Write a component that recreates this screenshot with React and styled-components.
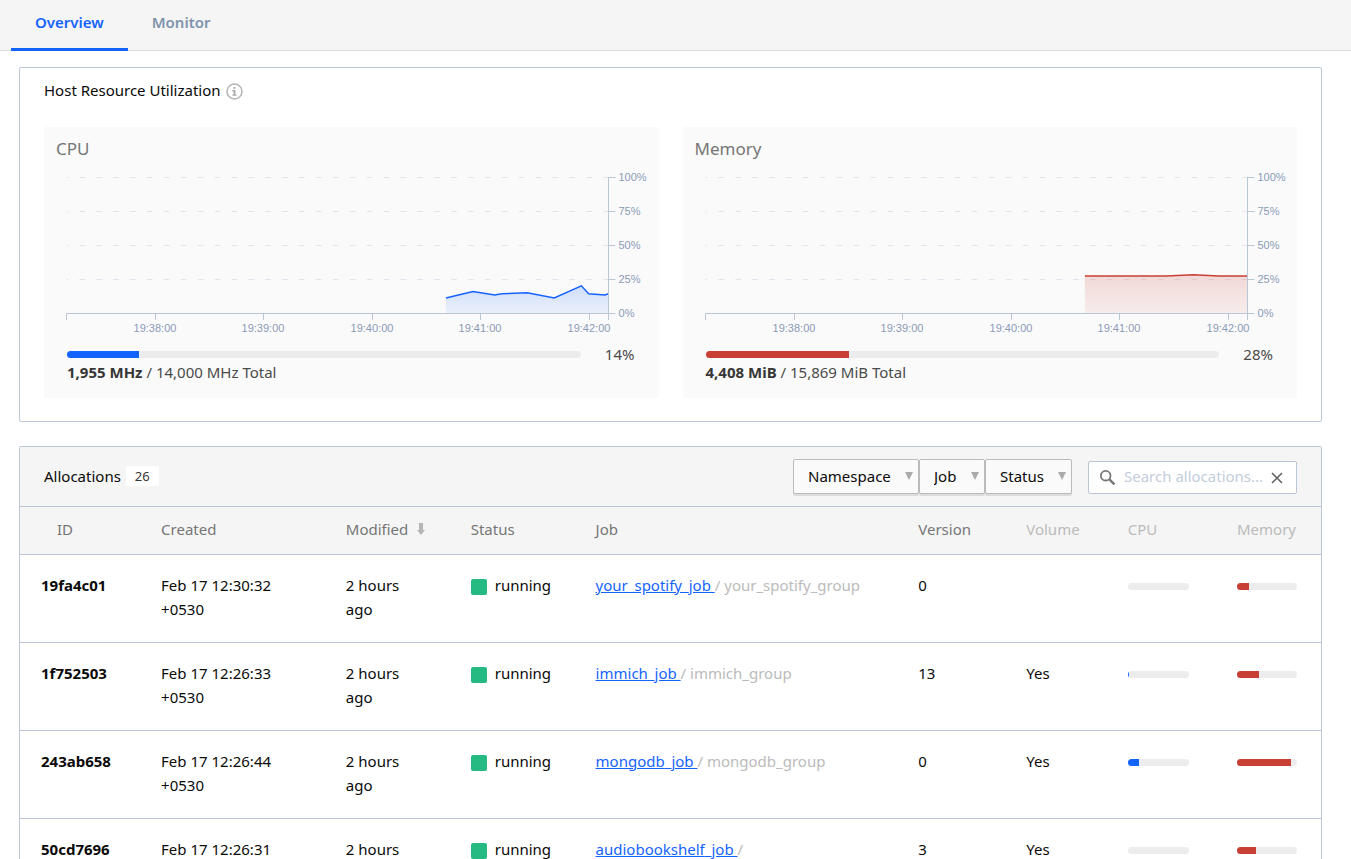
import { useLayoutEffect, useRef, useState } from "react";
import styled, { createGlobalStyle } from "styled-components";

const COLORS = {
  BLUE: "#1563ff",
  RED: "#c84034",
  GREEN: "#25ba81",
  BORDER: "#bac5d5",
  GREY_TEXT: "#767676",
  LIGHT_TEXT: "#bbbbbb",
  AXIS_TEXT: "#8a9ab8",
};

const GlobalStyle = createGlobalStyle`
  * {
    box-sizing: border-box;
  }

  body {
    margin: 0;
    background: white;
    color: #0a0a0a;
    font-family: "Noto Sans", "Open Sans", sans-serif;
    font-size: 15px;
    line-height: 24px;
  }
`;

const Tabs = styled.nav`
  display: flex;
  height: 51px;
  padding-left: 11px;
  background: #f5f5f5;
  border-bottom: 1px solid #dbdbdb;
`;

const Tab = styled.a`
  height: 51px;
  padding: 10px 24px 0 24px;
  border-bottom: 3px solid
    ${(props) => (props.$active ? COLORS.BLUE : "transparent")};
  color: ${(props) => (props.$active ? COLORS.BLUE : "#7f93ac")};
  font-weight: 600;
  text-decoration: none;
`;

const Page = styled.main`
  display: flex;
  flex-direction: column;
  gap: 24px;
  padding: 16px 29px 24px 19px;
`;

const Box = styled.section`
  border: 1px solid ${COLORS.BORDER};
  border-radius: 2px;
`;

const BoxTitle = styled.h2`
  display: flex;
  align-items: center;
  gap: 5px;
  margin: 0;
  padding-bottom: 2px;
  font-size: 15px;
  font-weight: 400;

  svg {
    margin-top: 2px;
  }
`;

const Utilization = styled.div`
  padding: 10px 24px 23px 24px;
`;

const MetricGrid = styled.div`
  display: grid;
  grid-template-columns: 1fr 1fr;
  gap: 24px;
  margin-top: 23px;
`;

const Metric = styled.div`
  min-width: 0;
  padding: 10px 0 16px 0;
  border-radius: 2px;
  background: #fafafa;
`;

const MetricTitle = styled.h3`
  margin: 0;
  padding: 0 12px;
  color: ${COLORS.GREY_TEXT};
  font-size: 17px;
  font-weight: 400;
  line-height: 24px;
`;

const ChartSvg = styled.svg`
  display: block;
  width: 100%;
  height: 185px;

  text {
    fill: ${COLORS.AXIS_TEXT};
    font-family: "Liberation Sans", Arial, sans-serif;
    font-size: 11px;
  }
`;

const Usage = styled.div`
  display: flex;
  align-items: center;
  gap: 24px;
  padding: 0 24px 0 23px;
  color: #4a4a4a;
  line-height: 16px;
`;

const Track = styled.div`
  flex: 1;
  height: 7px;
  overflow: hidden;
  border-radius: 4px;
  background: #ececec;
`;

const Fill = styled.div`
  height: 100%;
  background: ${(props) => props.$color};
`;

const Totals = styled.p`
  margin: 0;
  padding: 0 24px 0 23px;
  color: #4a4a4a;
  line-height: 20px;

  strong {
    color: #363636;
    font-weight: 700;
  }
`;

const TableHead = styled.header`
  display: flex;
  align-items: center;
  height: 60px;
  padding: 0 24px;
  border-bottom: 1px solid ${COLORS.BORDER};
  background: #f5f5f5;
`;

const Count = styled.span`
  padding: 0 9px;
  border-radius: 2px;
  background: white;
  color: #363636;
  font-size: 13px;
  line-height: 20px;
`;

const Filters = styled.div`
  display: flex;
  margin-left: auto;
  margin-right: 16px;
`;

const FilterWrapper = styled.label`
  position: relative;
  display: flex;
`;

const FilterSelect = styled.select`
  appearance: none;
  height: 35px;
  padding: 0 27px 2px 14px;
  border: 1px solid ${COLORS.LIGHT_TEXT};
  border-radius: 2px;
  background: #fafafa;
  box-shadow: 0 2px 0 rgba(0, 0, 0, 0.1);
  color: #0a0a0a;
  font: inherit;
`;

const Caret = styled.svg`
  position: absolute;
  top: 13px;
  right: 6px;
  width: 8px;
  height: 8px;
  pointer-events: none;
`;

const SearchBox = styled.label`
  display: flex;
  align-items: center;
  width: 209px;
  height: 33px;
  margin-top: 2px;
  padding: 0 12px 0 10px;
  border: 1px solid ${COLORS.BORDER};
  border-radius: 2px;
  background: white;
`;

const SearchInput = styled.input`
  flex: 1;
  min-width: 0;
  padding: 0 0 3px 0;
  margin-left: 7px;
  border: none;
  outline: none;
  font: inherit;

  &::placeholder {
    color: #c3cddb;
    opacity: 1;
  }
`;

const ClearBtn = styled.button`
  display: flex;
  padding: 0;
  border: none;
  background: none;
`;

const Table = styled.table`
  width: 100%;
  table-layout: fixed;
  border-collapse: collapse;
`;

const Th = styled.th`
  height: 47px;
  padding: 0 24px 3px 24px;
  background: #f5f5f5;
  border-bottom: 1px solid ${COLORS.BORDER};
  color: ${(props) => (props.$muted ? COLORS.LIGHT_TEXT : COLORS.GREY_TEXT)};
  font-weight: 400;
  text-align: left;
  white-space: nowrap;

  &:first-child {
    padding-left: 37px;
  }

  svg {
    margin-left: 9px;
  }
`;

const Td = styled.td`
  height: 88px;
  padding: 18px 24px 20px 24px;
  border-bottom: 1px solid ${COLORS.BORDER};
  vertical-align: top;

  &:first-child {
    padding-left: 21px;
    font-weight: 700;
  }
`;

const Status = styled.span`
  display: flex;
  align-items: center;
  gap: 8px;

  &::before {
    content: "";
    flex: none;
    width: 16px;
    height: 16px;
    margin-top: 4px;
    border-radius: 2px;
    background: ${COLORS.GREEN};
  }
`;

const JobLink = styled.a`
  color: ${COLORS.BLUE};
  text-decoration: underline;
  white-space: pre;
`;

const Group = styled.span`
  color: ${COLORS.LIGHT_TEXT};
`;

const BarCell = styled.div`
  display: flex;
  align-items: center;
  height: 28px;
`;

// seconds before the right edge, percent
const cpuSeries = [
  [90, 11],
  [75, 15.8],
  [63, 13.3],
  [59, 14.2],
  [45, 14.9],
  [30, 11],
  [15, 20],
  [11, 14.2],
  [2, 13.3],
  [0, 14.2],
];

const memorySeries = [
  [90, 27.2],
  [45, 27.2],
  [30, 28.2],
  [16, 27.2],
  [0, 27.2],
];

const timeTicks = [
  [251, "19:38:00"],
  [191, "19:39:00"],
  [131, "19:40:00"],
  [71, "19:41:00"],
  [11, "19:42:00"],
];

const columns = [
  { name: "ID", width: "9%" },
  { name: "Created", width: "14.2%" },
  { name: "Modified", width: "9.6%", sorted: true },
  { name: "Status", width: "9.6%" },
  { name: "Job", width: "24.8%" },
  { name: "Version", width: "8.3%" },
  { name: "Volume", width: "7.8%", muted: true },
  { name: "CPU", width: "8.4%", muted: true },
  { name: "Memory", width: "8.3%", muted: true },
];

const allocations = [
  { id: "19fa4c01", created: "12:30:32", name: "your_spotify", version: 0, volume: "", cpu: 0, memory: 20 },
  { id: "1f752503", created: "12:26:33", name: "immich", version: 13, volume: "Yes", cpu: 2, memory: 36 },
  { id: "243ab658", created: "12:26:44", name: "mongodb", version: 0, volume: "Yes", cpu: 18, memory: 90 },
  { id: "50cd7696", created: "12:26:31", name: "audiobookshelf", version: 3, volume: "Yes", cpu: 0, memory: 31 },
];

const CHART_TOP = 16;
const CHART_HEIGHT = 136;

function Chart({ id, label, color, series }) {
  const ref = useRef(null);
  const [width, setWidth] = useState(614);

  useLayoutEffect(() => {
    const update = () => setWidth(Math.floor(ref.current.clientWidth));
    update();
    const observer = new ResizeObserver(update);
    observer.observe(ref.current);
    return () => observer.disconnect();
  }, []);

  const left = 22.5;
  const right = width - 50.5;
  const bottom = CHART_TOP + CHART_HEIGHT;
  const x = (t) => right - (t / 300) * (right - left);
  const y = (value) => bottom - (value / 100) * CHART_HEIGHT;
  const line = series.map(([t, v]) => `${x(t)},${y(v)}`).join(" L");

  return (
    <ChartSvg ref={ref} role="img" aria-label={label}>
      <defs>
        <linearGradient id={id} x1="0" y1="0" x2="0" y2="1">
          <stop offset="0%" stopColor={color} stopOpacity="0.18" />
          <stop offset="100%" stopColor={color} stopOpacity="0.07" />
        </linearGradient>
      </defs>
      {[25, 50, 75, 100].map((v) => (
        <path
          key={v}
          d={`M${left},${Math.round(y(v)) + 0.5} H${right}`}
          stroke="#e1e4ec"
          strokeDasharray="5.6 11.3"
          strokeDashoffset="4"
        />
      ))}
      <path
        d={`M${x(series[0][0])},${bottom} L${line} V${bottom} Z`}
        fill={`url(#${id})`}
      />
      <path d={`M${line}`} fill="none" stroke={color} strokeWidth="1.5" />
      <path
        d={`M${left},${bottom + 7} V${bottom + 0.5} H${right} V${bottom + 7}`}
        fill="none"
        stroke={COLORS.BORDER}
      />
      {timeTicks.map(([t, text]) => (
        <g key={text}>
          <path
            d={`M${Math.round(x(t)) + 0.5},${bottom} v7`}
            stroke={COLORS.BORDER}
          />
          <text x={Math.round(x(t))} y={bottom + 19} textAnchor="middle">
            {text}
          </text>
        </g>
      ))}
      <path
        d={`M${right},${CHART_TOP} V${bottom}`}
        stroke={COLORS.BORDER}
      />
      {[0, 25, 50, 75, 100].map((v) => (
        <g key={v}>
          <path
            d={`M${right},${Math.round(y(v)) + 0.5} h7`}
            stroke={COLORS.BORDER}
          />
          <text x={right + 10} y={Math.round(y(v)) + 4}>
            {v}%
          </text>
        </g>
      ))}
    </ChartSvg>
  );
}

function Bar({ percent, color, label }) {
  return (
    <Track role="img" aria-label={`${label} ${percent}%`}>
      <Fill $color={color} style={{ width: `${percent}%` }} />
    </Track>
  );
}

function MetricPanel({ title, id, color, series, percent, used, total }) {
  return (
    <Metric>
      <MetricTitle>{title}</MetricTitle>
      <Chart id={id} label={title} color={color} series={series} />
      <Usage>
        <Bar percent={percent} color={color} label={title} />
        <span>{percent}%</span>
      </Usage>
      <Totals>
        <strong>{used}</strong> / {total} Total
      </Totals>
    </Metric>
  );
}

function Filter({ name }) {
  return (
    <FilterWrapper>
      <FilterSelect aria-label={name}>
        <option>{name}</option>
      </FilterSelect>
      <Caret viewBox="0 0 8 8" aria-hidden="true">
        <path d="M0 0h8L4 8z" fill="#aaaaaa" />
      </Caret>
    </FilterWrapper>
  );
}

function App() {
  const [searchText, setSearchText] = useState("");

  return (
    <>
      <GlobalStyle />
      <Tabs>
        <Tab href="#overview" $active>
          Overview
        </Tab>
        <Tab href="#monitor">Monitor</Tab>
      </Tabs>
      <Page>
        <Box>
          <Utilization>
            <BoxTitle>
              Host Resource Utilization
              <svg width="17" height="17" viewBox="0 0 17 17" aria-hidden="true">
                <circle
                  cx="8.5"
                  cy="8.5"
                  r="7.5"
                  fill="none"
                  stroke="#b5b5b5"
                  strokeWidth="1.5"
                />
                <path
                  d="M7.4 4h2v1.8h-2zM6.4 7h3v4.4h1.2v1.4H6.4v-1.4h1.2V8.4H6.4z"
                  fill="#a8a8a8"
                />
              </svg>
            </BoxTitle>
            <MetricGrid>
              <MetricPanel
                title="CPU"
                id="cpu-fill"
                color={COLORS.BLUE}
                series={cpuSeries}
                percent={14}
                used="1,955 MHz"
                total="14,000 MHz"
              />
              <MetricPanel
                title="Memory"
                id="memory-fill"
                color={COLORS.RED}
                series={memorySeries}
                percent={28}
                used="4,408 MiB"
                total="15,869 MiB"
              />
            </MetricGrid>
          </Utilization>
        </Box>

        <Box>
          <TableHead>
            <BoxTitle>
              Allocations <Count>26</Count>
            </BoxTitle>
            <Filters>
              <Filter name="Namespace" />
              <Filter name="Job" />
              <Filter name="Status" />
            </Filters>
            <SearchBox>
              <svg width="18" height="18" viewBox="0 0 18 18" aria-hidden="true">
                <circle
                  cx="6.7"
                  cy="6.7"
                  r="4.8"
                  fill="none"
                  stroke="#767676"
                  strokeWidth="1.8"
                />
                <path
                  d="M10.4 10.4l5 5"
                  stroke="#767676"
                  strokeWidth="2.4"
                />
              </svg>
              <SearchInput
                value={searchText}
                onChange={(e) => setSearchText(e.target.value)}
                placeholder="Search allocations..."
                aria-label="Search allocations"
              />
              <ClearBtn aria-label="Clear" onClick={() => setSearchText("")}>
                <svg width="14" height="14" viewBox="0 0 14 14">
                  <path
                    d="M2 2l10 10M12 2L2 12"
                    stroke="#5f5f5f"
                    strokeWidth="1.5"
                  />
                </svg>
              </ClearBtn>
            </SearchBox>
          </TableHead>
          <Table>
            <colgroup>
              {columns.map((column) => (
                <col key={column.name} width={column.width} />
              ))}
            </colgroup>
            <thead>
              <tr>
                {columns.map((column) => (
                  <Th key={column.name} $muted={column.muted}>
                    {column.name}
                    {column.sorted && (
                      <svg width="8" height="12" viewBox="0 0 8 12">
                        <path d="M2 0h4v7h2L4 12 0 7h2z" fill="#b5b5b5" />
                      </svg>
                    )}
                  </Th>
                ))}
              </tr>
            </thead>
            <tbody>
              {allocations.map((item) => (
                <tr key={item.id}>
                  <Td>{item.id}</Td>
                  <Td>Feb 17 {item.created} +0530</Td>
                  <Td>2 hours ago</Td>
                  <Td>
                    <Status>running</Status>
                  </Td>
                  <Td>
                    <JobLink href={`#${item.name}`}>{item.name}_job </JobLink>
                    <Group>/ {item.name}_group</Group>
                  </Td>
                  <Td>{item.version}</Td>
                  <Td>{item.volume}</Td>
                  <Td>
                    <BarCell>
                      <Bar percent={item.cpu} color={COLORS.BLUE} label="CPU" />
                    </BarCell>
                  </Td>
                  <Td>
                    <BarCell>
                      <Bar
                        percent={item.memory}
                        color={COLORS.RED}
                        label="Memory"
                      />
                    </BarCell>
                  </Td>
                </tr>
              ))}
            </tbody>
          </Table>
        </Box>
      </Page>
    </>
  );
}

export default App;
